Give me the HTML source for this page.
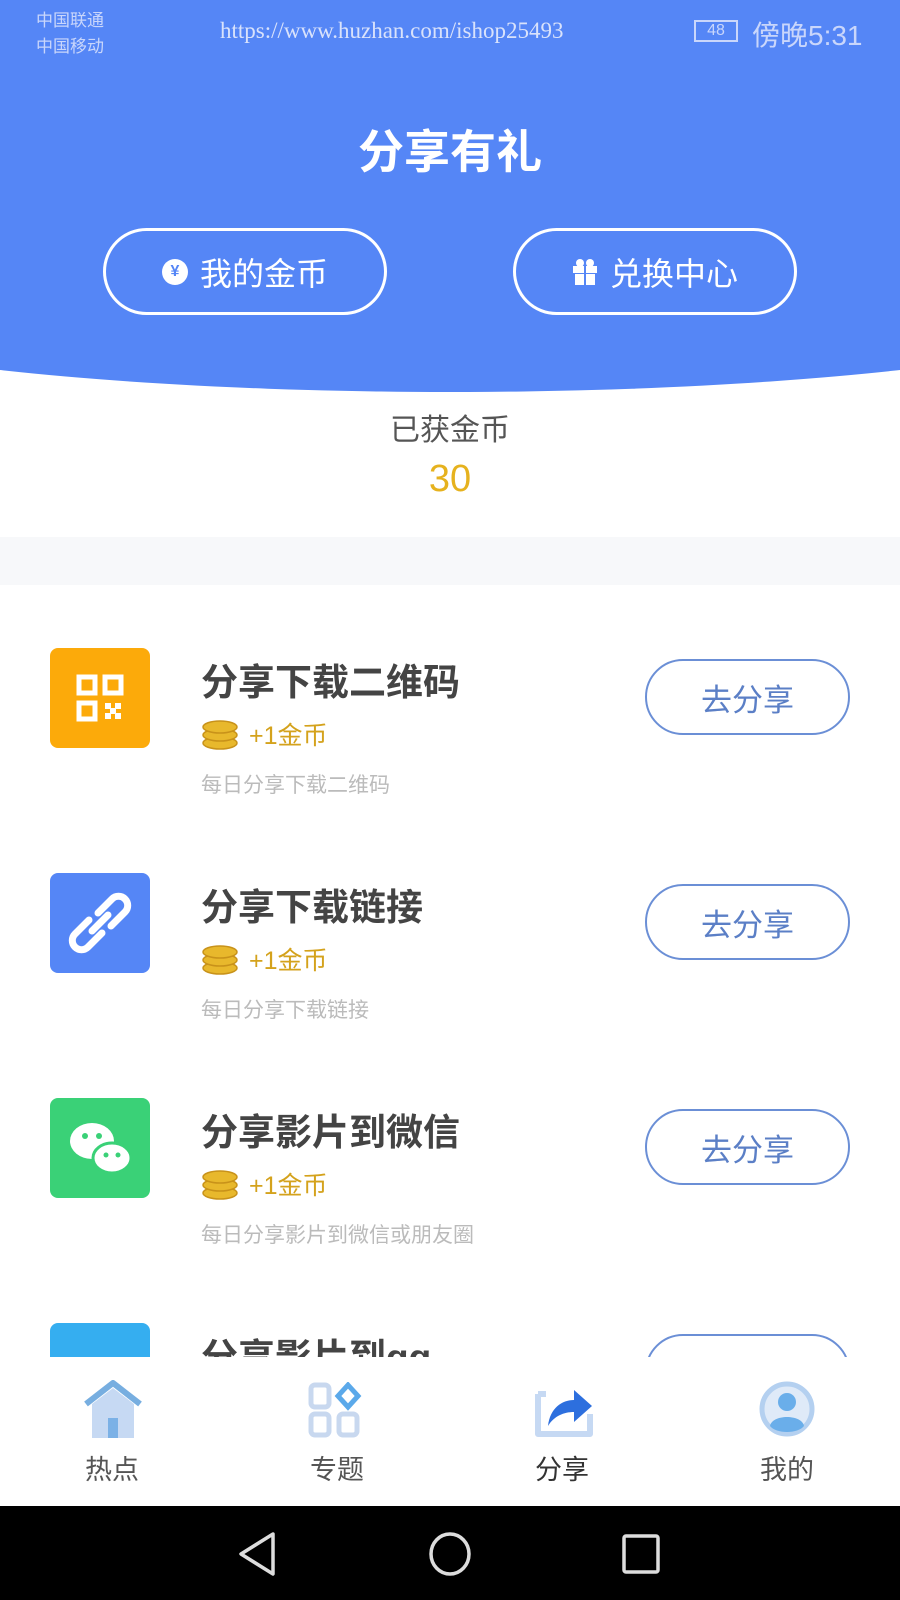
<!DOCTYPE html>
<html><head><meta charset="utf-8"><style>
*{margin:0;padding:0;box-sizing:border-box}
body{width:900px;height:1600px;position:relative;overflow:hidden;background:#fff;font-family:"Liberation Sans","Noto Sans CJK SC",sans-serif}
.abs{position:absolute}
.hdr{left:-300px;top:-600px;width:1500px;height:992px;background:#5586f6;border-radius:0 0 50% 50%/0 0 110px 110px}
.btn{border:3px solid #fff;border-radius:45px;color:#fff;font-size:32px;display:flex;align-items:center;justify-content:center;gap:12px}
.item .ic{position:absolute;left:50px;width:100px;height:100px;border-radius:8px}
.t{position:absolute;left:201px;font-size:37px;font-weight:bold;color:#444}
.c{position:absolute;left:201px;font-size:25px;color:#d4a21c;display:flex;align-items:center;gap:10px}
.d{position:absolute;left:201px;font-size:21px;color:#bbb}
.g{position:absolute;left:645px;width:205px;height:76px;border:2.5px solid #6b8fd6;border-radius:40px;color:#5b7fc6;font-size:31px;display:flex;align-items:center;justify-content:center}
.tab{position:absolute;top:1448px;font-size:27px;color:#555;width:100px;text-align:center}
</style></head><body>
<div class="abs hdr"></div>
<div class="abs" style="left:36px;top:8px;color:#c9d6fb;font-size:17px;line-height:26px">中国联通<br>中国移动</div>
<div class="abs" style="left:220px;top:18px;color:#d9e2fb;font-size:23px;font-family:'Liberation Serif',serif">https://www.huzhan.com/ishop25493</div>
<div class="abs" style="left:694px;top:20px;width:44px;height:22px;border:2px solid #c9d6fb;color:#c9d6fb;font-size:16px;text-align:center;line-height:18px">48</div>
<div class="abs" style="left:752px;top:14px;color:#c9d6fb;font-size:28px">傍晚5:31</div>
<div class="abs" style="left:0;width:900px;top:116px;text-align:center;color:#fff;font-size:46px;font-weight:bold">分享有礼</div>
<div class="abs btn" style="left:103px;top:228px;width:284px;height:87px"><span style="width:26px;height:26px;border-radius:50%;background:#fff;color:#5586f6;font-size:16px;display:flex;align-items:center;justify-content:center;font-weight:bold">¥</span>我的金币</div>
<div class="abs btn" style="left:513px;top:228px;width:284px;height:87px"><svg width="26" height="28" viewBox="0 0 26 28"><rect x="1" y="8" width="24" height="7" fill="#fff"/><rect x="3" y="16" width="20" height="11" fill="#fff"/><rect x="12" y="8" width="2" height="19" fill="#5586f6"/><circle cx="8" cy="5" r="4" fill="#fff"/><circle cx="18" cy="5" r="4" fill="#fff"/></svg>兑换中心</div>
<div class="abs" style="left:0;width:900px;top:405px;text-align:center;color:#555;font-size:30px">已获金币</div>
<div class="abs" style="left:0;width:900px;top:458px;text-align:center;color:#e6b21e;font-size:38px">30</div>
<div class="abs" style="left:0;top:537px;width:900px;height:48px;background:#f7f8fa"></div>

<div class="item">
<div class="ic" style="top:648px;background:#fcaa0a"><svg width="100" height="100"><g fill="none" stroke="#fff" stroke-width="5"><rect x="29" y="29" width="16" height="16"/><rect x="55" y="29" width="16" height="16"/><rect x="29" y="55" width="16" height="16"/></g><g fill="#fff"><rect x="55" y="55" width="6" height="6"/><rect x="65" y="55" width="6" height="6"/><rect x="60" y="60" width="6" height="6"/><rect x="55" y="65" width="6" height="6"/><rect x="65" y="65" width="6" height="6"/></g></svg></div>
<div class="t" style="top:652px">分享下载二维码</div>
<div class="c" style="top:716px"><svg width="38" height="34"><g fill="#e8b82c" stroke="#c8921a" stroke-width="1.5"><ellipse cx="19" cy="26" rx="17" ry="6"/><ellipse cx="19" cy="18" rx="17" ry="6"/><ellipse cx="19" cy="10" rx="17" ry="6"/></g></svg>+1金币</div>
<div class="d" style="top:769px">每日分享下载二维码</div>
<div class="g" style="top:659px">去分享</div>
</div>
<div class="item">
<div class="ic" style="top:873px;background:#5586f6"><svg width="100" height="100"><g fill="none" stroke="#fff" stroke-width="7" stroke-linecap="round"><path d="M48 40 L62 26 a9 9 0 0 1 13 13 L61 53"/><path d="M52 60 L38 74 a9 9 0 0 1 -13 -13 L39 47"/><path d="M42 58 L58 42"/></g></svg></div>
<div class="t" style="top:877px">分享下载链接</div>
<div class="c" style="top:941px"><svg width="38" height="34"><g fill="#e8b82c" stroke="#c8921a" stroke-width="1.5"><ellipse cx="19" cy="26" rx="17" ry="6"/><ellipse cx="19" cy="18" rx="17" ry="6"/><ellipse cx="19" cy="10" rx="17" ry="6"/></g></svg>+1金币</div>
<div class="d" style="top:994px">每日分享下载链接</div>
<div class="g" style="top:884px">去分享</div>
</div>
<div class="item">
<div class="ic" style="top:1098px;background:#3ad177"><svg width="100" height="100"><ellipse cx="42" cy="43" rx="22" ry="18" fill="#fff"/><ellipse cx="62" cy="60" rx="19" ry="15" fill="#fff" stroke="#3ad177" stroke-width="3"/><circle cx="35" cy="38" r="3" fill="#3ad177"/><circle cx="49" cy="38" r="3" fill="#3ad177"/><circle cx="56" cy="57" r="2.5" fill="#3ad177"/><circle cx="68" cy="57" r="2.5" fill="#3ad177"/></svg></div>
<div class="t" style="top:1102px">分享影片到微信</div>
<div class="c" style="top:1166px"><svg width="38" height="34"><g fill="#e8b82c" stroke="#c8921a" stroke-width="1.5"><ellipse cx="19" cy="26" rx="17" ry="6"/><ellipse cx="19" cy="18" rx="17" ry="6"/><ellipse cx="19" cy="10" rx="17" ry="6"/></g></svg>+1金币</div>
<div class="d" style="top:1219px">每日分享影片到微信或朋友圈</div>
<div class="g" style="top:1109px">去分享</div>
</div>
<div class="item">
<div class="ic" style="top:1323px;background:#35aef0"></div>
<div class="t" style="top:1327px">分享影片到qq</div>
<div class="g" style="top:1334px">去分享</div>
</div>

<div class="abs" style="left:0;top:1357px;width:900px;height:150px;background:#fff"></div>
<svg class="abs" style="left:82px;top:1380px" width="62" height="60"><path d="M4 24 L31 3 L58 24" fill="none" stroke="#77aee0" stroke-width="6" stroke-linejoin="round"/><path d="M10 24 L31 8 L52 24 V58 H10Z" fill="#c6d9f3"/><rect x="26" y="38" width="10" height="20" fill="#7bb1e6"/></svg>
<svg class="abs" style="left:308px;top:1382px" width="58" height="56"><g fill="none" stroke="#c8d8ef" stroke-width="5"><rect x="3" y="3" width="18" height="22" rx="4"/><rect x="3" y="32" width="18" height="21" rx="4"/><rect x="31" y="32" width="18" height="21" rx="4"/></g><path d="M40 3 L50 14 L40 25 L30 14Z" fill="none" stroke="#5ba9ea" stroke-width="5"/></svg>
<svg class="abs" style="left:532px;top:1380px" width="64" height="60"><path d="M6 14 H14 M6 14 V54 H58 V34" fill="none" stroke="#c6d9f3" stroke-width="6" stroke-linejoin="round"/><path d="M16 46 C18 28 30 20 42 20 V10 L60 26 L42 42 V32 C32 32 22 36 16 46Z" fill="#2d6fde"/></svg>
<svg class="abs" style="left:758px;top:1380px" width="58" height="58"><circle cx="29" cy="29" r="25" fill="#dfeaf8" stroke="#b4d0f0" stroke-width="5"/><circle cx="29" cy="22" r="9" fill="#6aaeea"/><path d="M12 46 C14 34 44 34 46 46 C40 54 18 54 12 46Z" fill="#6aaeea"/></svg>
<div class="tab" style="left:62px">热点</div>
<div class="tab" style="left:287px">专题</div>
<div class="tab" style="left:512px;color:#333">分享</div>
<div class="tab" style="left:737px">我的</div>

<div class="abs" style="left:0;top:1506px;width:900px;height:94px;background:#000"></div>
<svg class="abs" style="left:230px;top:1530px" width="440" height="48"><path d="M43 4 L11 24 L43 44Z" fill="none" stroke="#ddd" stroke-width="3.5" stroke-linejoin="round"/><ellipse cx="220" cy="24" rx="19" ry="20" fill="none" stroke="#ddd" stroke-width="3.5"/><rect x="394" y="6" width="34" height="36" rx="2" fill="none" stroke="#ddd" stroke-width="3.5"/></svg>
</body></html>
